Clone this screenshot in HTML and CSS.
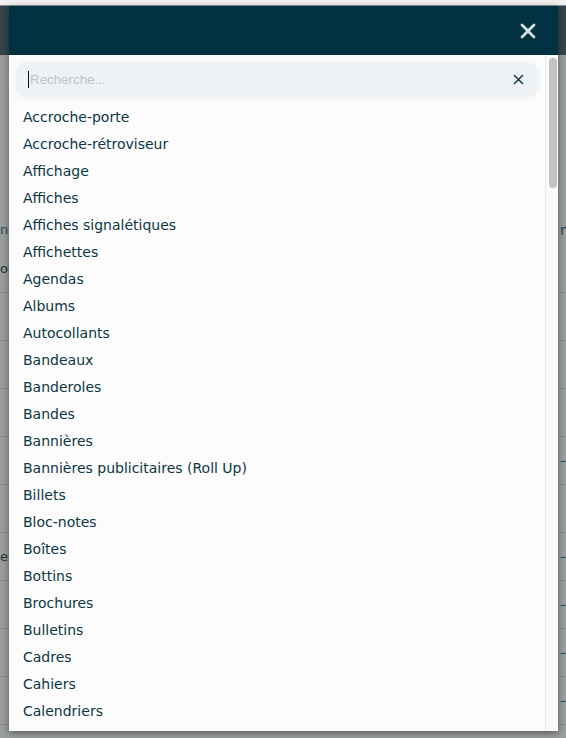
FILE: index.html
```html
<!DOCTYPE html>
<html lang="fr">
<head>
<meta charset="utf-8">
<title>Recherche</title>
<link rel="stylesheet" href="styles.css">
</head>
<body>
<div class="page">
  <div class="page-top"></div>
  <div class="page-header"></div>
  <div class="page-body">
    <div class="page-intro">
      <span class="cell-left link">n</span>
      <span class="cell-right link">n</span>
    </div>
    <div class="bg-row"><span class="cell-left">ot</span><span class="cell-right"></span></div>
    <div class="bg-row"><span class="cell-left"></span><span class="cell-right"></span></div>
    <div class="bg-row"><span class="cell-left"></span><span class="cell-right"></span></div>
    <div class="bg-row"><span class="cell-left"></span><span class="cell-right"></span></div>
    <div class="bg-row"><span class="cell-left"></span><span class="cell-right dash">–</span></div>
    <div class="bg-row"><span class="cell-left"></span><span class="cell-right"></span></div>
    <div class="bg-row"><span class="cell-left">ers</span><span class="cell-right dash">–</span></div>
    <div class="bg-row"><span class="cell-left"></span><span class="cell-right dash">–</span></div>
    <div class="bg-row"><span class="cell-left"></span><span class="cell-right dash">–</span></div>
    <div class="bg-row"><span class="cell-left"></span><span class="cell-right dash">–</span></div>
  </div>
</div>

<div class="modal">
  <div class="modal-header">
    <button class="close-btn" aria-label="Fermer">
      <svg width="16" height="16" viewBox="0 0 16 16"><path d="M2 2 L14 14 M14 2 L2 14" stroke="#d3e5ea" stroke-width="2.8" stroke-linecap="round" fill="none"/></svg>
    </button>
  </div>
  <div class="modal-body">
    <div class="content">
      <div class="search">
        <span class="caret"></span>
        <span class="placeholder">Recherche...</span>
        <svg class="clear" width="11" height="11" viewBox="0 0 11 11"><path d="M1 1 L10 10 M10 1 L1 10" stroke="#1b3d48" stroke-width="1.5" fill="none"/></svg>
      </div>
      <ul class="list">
        <li>Accroche-porte</li>
        <li>Accroche-rétroviseur</li>
        <li>Affichage</li>
        <li>Affiches</li>
        <li>Affiches signalétiques</li>
        <li>Affichettes</li>
        <li>Agendas</li>
        <li>Albums</li>
        <li>Autocollants</li>
        <li>Bandeaux</li>
        <li>Banderoles</li>
        <li>Bandes</li>
        <li>Bannières</li>
        <li>Bannières publicitaires (Roll Up)</li>
        <li>Billets</li>
        <li>Bloc-notes</li>
        <li>Boîtes</li>
        <li>Bottins</li>
        <li>Brochures</li>
        <li>Bulletins</li>
        <li>Cadres</li>
        <li>Cahiers</li>
        <li>Calendriers</li>
      </ul>
    </div>
    <div class="scrolltrack"><div class="thumb"></div></div>
  </div>
</div>
</body>
</html>
```
FILE: styles.css
```css
html, body {
  margin: 0;
  padding: 0;
}
body {
  width: 566px;
  height: 738px;
  overflow: hidden;
  position: relative;
  background: #9b9e9f;
  font-family: "DejaVu Sans", Verdana, sans-serif;
}
.page {
  display: flex;
  flex-direction: column;
  height: 738px;
}
.page-top {
  height: 5px;
  background: #f1f1f1;
  border-bottom: 1px solid #8c8f90;
}
.page-header {
  height: 49px;
  background: #34444a;
}
.page-body {
  flex: 1;
  display: flex;
  flex-direction: column;
  background: #9b9e9f;
}
.page-intro {
  height: 190px;
  display: flex;
  justify-content: space-between;
  align-items: flex-end;
}
.page-intro .cell-left,
.page-intro .cell-right {
  height: 26px;
  line-height: 26px;
  position: relative;
  top: -2px;
}
.bg-row {
  height: 47px;
  border-bottom: 1px solid #878b8c;
  display: flex;
  justify-content: space-between;
  align-items: center;
}
.cell-left {
  width: 9px;
  overflow: hidden;
  white-space: nowrap;
  font-size: 13px;
  color: #24343a;
}
.cell-right {
  width: 6px;
  overflow: hidden;
  white-space: nowrap;
  font-size: 14px;
  color: #24343a;
  padding-left: 2px;
}
.link {
  color: #1d4a5a;
}
.dash {
  color: #1c3f4b;
  font-size: 12px;
}

.modal {
  position: absolute;
  left: 9px;
  top: 6px;
  width: 549px;
  height: 725px;
  display: flex;
  flex-direction: column;
  background: #fcfcfc;
  box-shadow: 0 2px 7px rgba(0, 0, 0, 0.45);
}
.modal-header {
  height: 49px;
  flex: none;
  background: #023241;
  display: flex;
  align-items: center;
  justify-content: flex-end;
  padding-right: 21px;
}
.close-btn {
  border: 0;
  background: none;
  padding: 0;
  width: 18px;
  height: 18px;
  display: flex;
  align-items: center;
  justify-content: center;
}
.modal-body {
  flex: 1;
  display: flex;
  min-height: 0;
}
.content {
  flex: 1;
  padding: 8px 8px 0 8px;
  overflow: hidden;
  display: flex;
  flex-direction: column;
}
.search {
  flex: none;
  height: 32px;
  background: #edf2f6;
  border-radius: 8px;
  box-shadow: 0 1px 6px rgba(0, 0, 0, 0.09);
  display: flex;
  align-items: center;
  padding: 0 13px 0 11px;
}
.caret {
  width: 1px;
  height: 17px;
  background: #111;
  margin-right: 1px;
}
.placeholder {
  flex: 1;
  font-family: "Liberation Sans", Arial, sans-serif;
  font-size: 13.333px;
  color: #bfc4cb;
}
.clear {
  flex: none;
}
.list {
  list-style: none;
  margin: 0;
  padding: 9px 0 0 6px;
}
.list li {
  height: 27px;
  line-height: 27px;
  font-size: 14px;
  color: #0c3644;
  white-space: nowrap;
}
.scrolltrack {
  flex: none;
  width: 12px;
  border-left: 1px solid #e8e8e8;
  background: #fafafa;
  padding-top: 3px;
}
.thumb {
  width: 8px;
  height: 130px;
  margin-left: 3px;
  border-radius: 4px;
  background: #c2c2c2;
}
```
